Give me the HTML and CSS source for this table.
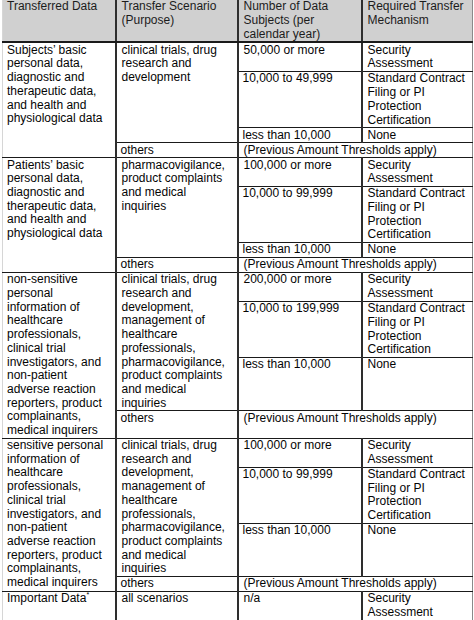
FILE: index.html
```html
<!DOCTYPE html>
<html>
<head>
<meta charset="utf-8">
<link rel="stylesheet" href="styles.css">
</head>
<body>
<table class="grid">
  <colgroup>
    <col class="c1"><col class="c2"><col class="c3"><col class="c4">
  </colgroup>
  <thead>
    <tr class="head">
      <th>Transferred Data</th>
      <th>Transfer Scenario (Purpose)</th>
      <th>Number of Data Subjects (per calendar year)</th>
      <th>Required Transfer Mechanism</th>
    </tr>
  </thead>
  <tbody>
    <tr class="sec">
      <td rowspan="4">Subjects’ basic personal data, diagnostic and therapeutic data, and health and physiological data</td>
      <td rowspan="3">clinical trials, drug research and development</td>
      <td>50,000 or more</td>
      <td>Security Assessment</td>
    </tr>
    <tr>
      <td>10,000 to 49,999</td>
      <td>Standard Contract Filing or PI Protection Certification</td>
    </tr>
    <tr>
      <td>less than 10,000</td>
      <td>None</td>
    </tr>
    <tr>
      <td>others</td>
      <td colspan="2">(Previous Amount Thresholds apply)</td>
    </tr>

    <tr class="sec">
      <td rowspan="4">Patients’ basic personal data, diagnostic and therapeutic data, and health and physiological data</td>
      <td rowspan="3">pharmacovigilance, product complaints and medical inquiries</td>
      <td>100,000 or more</td>
      <td>Security Assessment</td>
    </tr>
    <tr>
      <td>10,000 to 99,999</td>
      <td>Standard Contract Filing or PI Protection Certification</td>
    </tr>
    <tr>
      <td>less than 10,000</td>
      <td>None</td>
    </tr>
    <tr>
      <td>others</td>
      <td colspan="2">(Previous Amount Thresholds apply)</td>
    </tr>

    <tr class="sec">
      <td rowspan="4">non-sensitive personal information of healthcare professionals, clinical trial investigators, and non-patient adverse reaction reporters, product complainants, medical inquirers</td>
      <td rowspan="3">clinical trials, drug research and development, management of healthcare professionals, pharmacovigilance, product complaints and medical inquiries</td>
      <td>200,000 or more</td>
      <td>Security Assessment</td>
    </tr>
    <tr>
      <td>10,000 to 199,999</td>
      <td>Standard Contract Filing or PI Protection Certification</td>
    </tr>
    <tr class="tall4">
      <td>less than 10,000</td>
      <td>None</td>
    </tr>
    <tr class="tall2">
      <td>others</td>
      <td colspan="2">(Previous Amount Thresholds apply)</td>
    </tr>

    <tr class="sec">
      <td rowspan="4">sensitive personal information of healthcare professionals, clinical trial investigators, and non-patient adverse reaction reporters, product complainants, medical inquirers</td>
      <td rowspan="3">clinical trials, drug research and development, management of healthcare professionals, pharmacovigilance, product complaints and medical inquiries</td>
      <td>100,000 or more</td>
      <td>Security Assessment</td>
    </tr>
    <tr>
      <td>10,000 to 99,999</td>
      <td>Standard Contract Filing or PI Protection Certification</td>
    </tr>
    <tr class="tall4">
      <td>less than 10,000</td>
      <td>None</td>
    </tr>
    <tr>
      <td>others</td>
      <td colspan="2">(Previous Amount Thresholds apply)</td>
    </tr>

    <tr class="sec last">
      <td>Important Data<sup class="mark">*</sup></td>
      <td>all scenarios</td>
      <td>n/a</td>
      <td>Security Assessment</td>
    </tr>
  </tbody>
</table>
</body>
</html>
```
FILE: styles.css
```css
html, body {
  margin: 0;
  padding: 0;
  background: #ffffff;
}

body {
  font-family: "Liberation Sans", Arial, sans-serif;
  font-size: 12px;
  color: #050505;
}

.grid {
  margin-left: 2px;
  width: 470px;
  border-collapse: collapse;
  table-layout: fixed;
  border-left: 1px solid #d6d6d6;
  border-right: 1px solid #8a8a8a;
}

.c1 { width: 113px; }
.c2 { width: 122px; }
.c3 { width: 124px; }
.c4 { width: 111px; }

.grid th,
.grid td {
  border-top: 1px solid #1a1a1a;
  border-bottom: 1px solid #1a1a1a;
  border-left: 2px solid #2e2e2e;
  border-right: 2px solid #2e2e2e;
  padding: 0.3px 6px 0 4px;
  line-height: 13.7px;
  vertical-align: top;
  text-align: left;
  font-weight: normal;
}

.grid td:first-child,
.grid th:first-child {
  border-left: 1px solid #d6d6d6;
}

.grid td:last-child,
.grid th:last-child {
  border-right: 1px solid #8a8a8a;
}

.grid td:nth-child(n+2),
.grid th:nth-child(n+2) {
  padding-left: 5px;
}

.head th {
  background: #d0d0d0;
  color: #1c1c1c;
  border-top: none;
  border-bottom: 2px solid #1a1a1a;
}

.tall4 td { height: 52px; }
.tall2 td { height: 26px; }

.last td {
  border-bottom: 2px solid #111111;
}

.mark {
  font-size: 7px;
  line-height: 0;
  vertical-align: 5px;
}
```
